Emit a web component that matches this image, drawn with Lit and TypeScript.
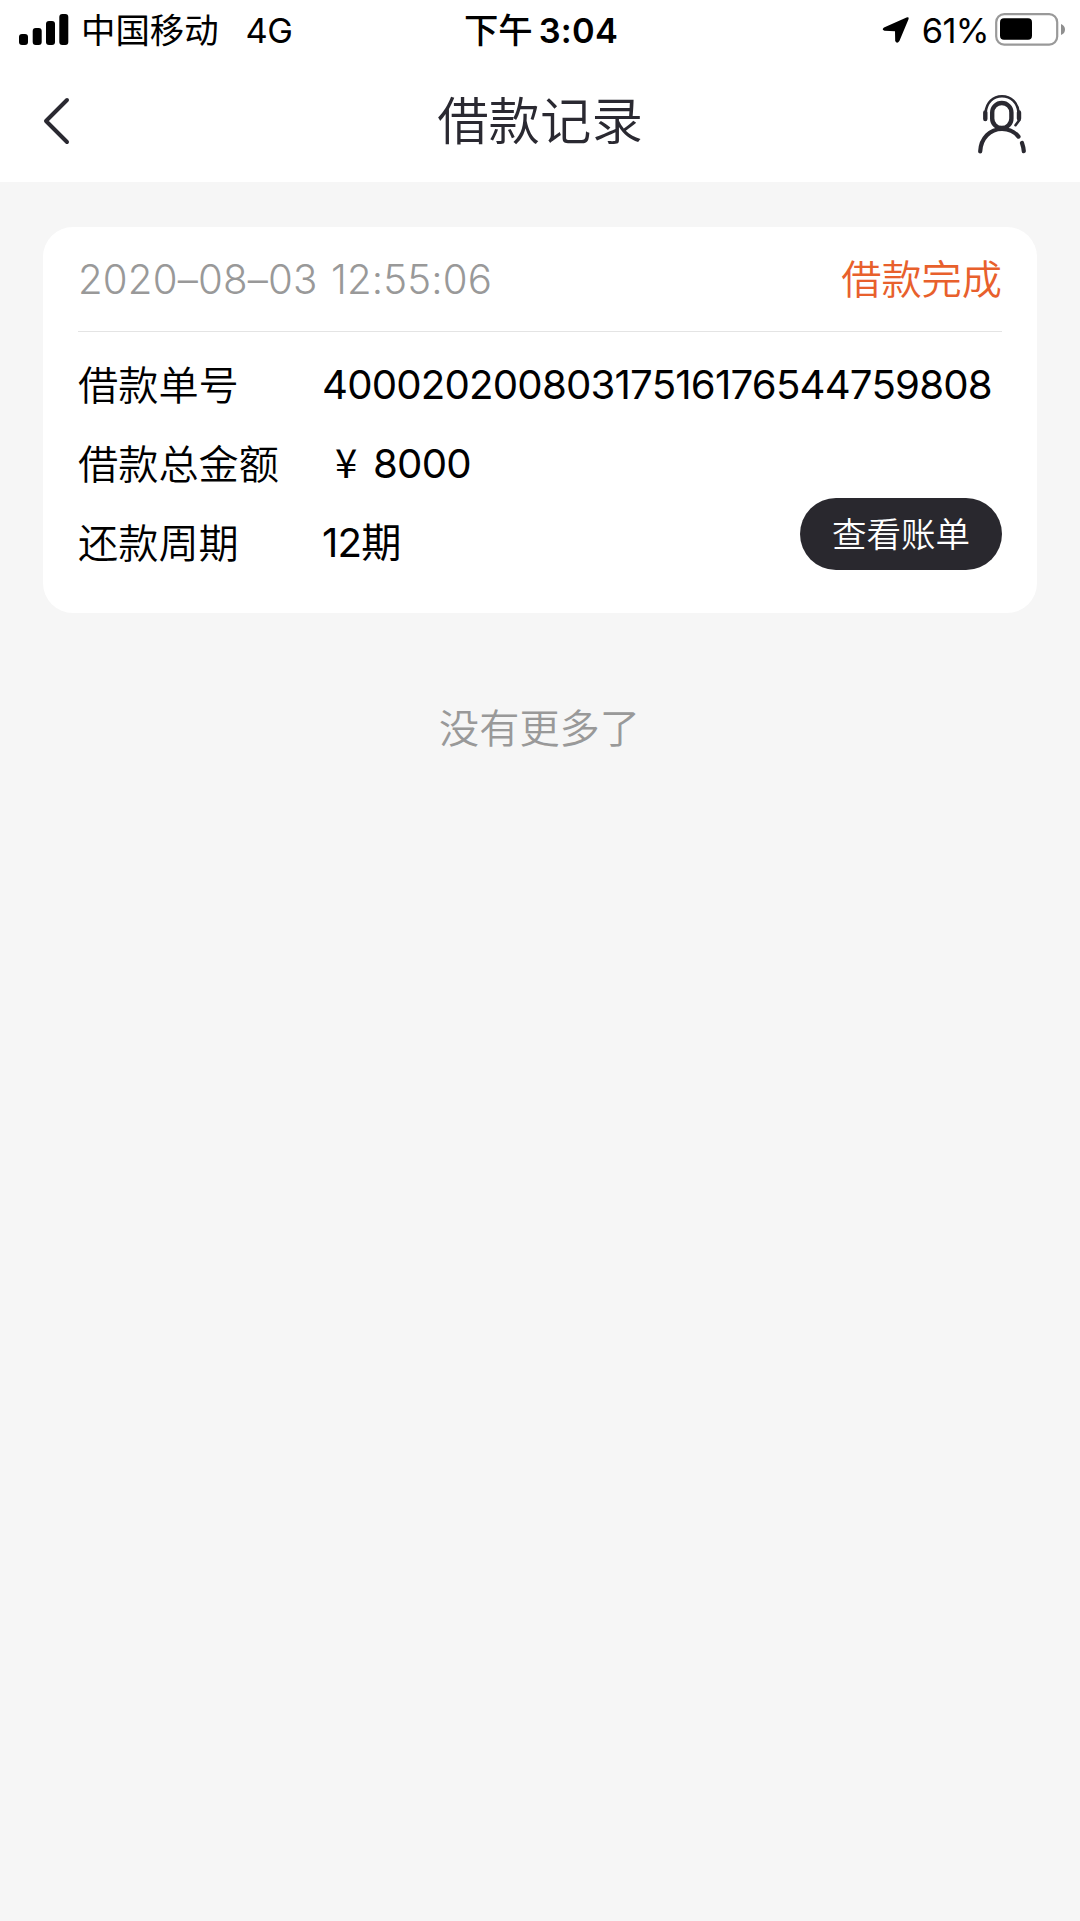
import { LitElement, html, css } from "lit";
import { customElement, property } from "lit/decorators.js";

interface Loan {
  time: string;
  status: string;
  number: string;
  amount: string;
  period: string;
}

@customElement("status-bar")
class StatusBar extends LitElement {
  static styles = css`
    :host {
      display: grid;
      grid-template-columns: 1fr auto 1fr;
      align-items: center;
      height: 60px;
      padding: 0 15px 0 19px;
      box-sizing: border-box;
      color: #000;
      font-size: 34.4px;
      line-height: 62px;
      white-space: nowrap;
    }
    .side { display: flex; align-items: center; height: 60px; }
    .right { justify-content: flex-end; }
    .signal { display: block; margin: 0 12px 3px 0; }
    .network { margin-left: 27px; letter-spacing: -0.5px; }
    .clock { display: flex; font-weight: 600; gap: 6px; margin-right: 2px; }
    .meridiem { font-weight: 500; }
    .digits { letter-spacing: 0.2px; }
    .arrow { display: block; margin: 0 12px 2px 0; }
    .percent { letter-spacing: -0.6px; margin-right: 6px; }
    .battery { margin-bottom: 3px; }
    svg { display: block; flex: none; }
  `;
  render() {
    return html`
      <div class="side">
        <svg class="signal" width="50" height="32" viewBox="0 0 50 32">
          <rect x="0" y="20" width="9" height="11" rx="3" />
          <rect x="13.7" y="14" width="9" height="17" rx="3" />
          <rect x="27" y="7" width="9" height="24" rx="3" />
          <rect x="40.3" y="0" width="9" height="31" rx="3" />
        </svg>
        <span>中国移动</span><span class="network">4G</span>
      </div>
      <div class="clock"><span class="meridiem">下午</span><span class="digits">3:04</span></div>
      <div class="side right">
        <svg class="arrow" width="28" height="28" viewBox="0 0 28 28">
          <path d="M2 11.600 24.500 1.400Q27.500 .4 26.400 3.400L17.400 25Q15 28.400 13.200 25L13 15.200 2.500 14.800Q-.8 13.600 2 11.600Z" />
        </svg>
        <span class="percent">61%</span>
        <svg class="battery" width="70" height="33" viewBox="0 0 70 33">
          <rect x="1.200" y="1.200" width="61" height="30.400" rx="8" fill="none" stroke="#999" stroke-width="2.200" />
          <rect x="5" y="5.300" width="32" height="21.400" rx="4" />
          <path d="M66 11Q70 12.500 70 16.500T66 22Z" fill="#8f8f8f" />
        </svg>
      </div>
    `;
  }
}

@customElement("nav-bar")
class NavBar extends LitElement {
  @property() heading = "";
  static styles = css`
    :host {
      display: grid;
      grid-template-columns: 1fr auto 1fr;
      align-items: center;
      height: 122px;
      padding: 0 43px;
      box-sizing: border-box;
      color: #2a2931;
    }
    .title { margin: 0; font-size: 51.4px; font-weight: 350; line-height: 122px; height: 122px; }
    .contact { justify-self: end; margin: 6px 11px 0 0; }
    svg { display: block; }
  `;
  render() {
    return html`
      <svg width="28" height="48" viewBox="0 0 28 48" fill="none" stroke="currentColor" stroke-width="4" stroke-linecap="round" stroke-linejoin="round">
        <path d="M24 3 3 24 24 45" />
      </svg>
      <h1 class="title">${this.heading}</h1>
      <svg class="contact" width="48" height="60" viewBox="0 0 48 60" fill="none" stroke="currentColor" stroke-linecap="round">
        <rect x="14.200" y="9" width="19.200" height="25" rx="9.600" stroke-width="4.400" />
        <path d="M2.200 57.400C2.800 44.200 12 35 24 35c6.500 0 12.500 2.600 16.500 7.600" stroke-width="4.200" />
        <path d="M44 49Q45.400 53 45.800 57.200" stroke-width="4.200" />
        <path d="M7.600 18.500C8.500 8.500 15 2.300 24 2.300s15.600 6.200 16.600 16.200" stroke-width="2.600" />
        <path d="M7.300 18.500v6.500M41 18.500v6" stroke-width="4.400" />
        <path d="M41.400 26 37.500 31.200" stroke-width="2.600" />
      </svg>
    `;
  }
}

@customElement("loan-card")
class LoanCard extends LitElement {
  @property({ attribute: false }) loan!: Loan;
  static styles = css`
    :host {
      display: block;
      box-sizing: border-box;
      height: 386px;
      padding: 0 35px;
      border-radius: 30px;
      background: #fff;
      color: #000;
      font-size: 40.2px;
    }
    .top {
      display: flex;
      justify-content: space-between;
      height: 104px;
      line-height: 106px;
      border-bottom: 1px solid #e4e4e4;
    }
    .time { color: #999; font-weight: 330; letter-spacing: 0.17px; word-spacing: 2px; }
    .status { color: #e8602c; font-weight: 350; }
    .body { display: flex; justify-content: space-between; position: relative; padding-top: 14px; }
    .fields {
      display: grid;
      grid-template-columns: 244px auto;
      grid-auto-rows: 79px;
      margin: 0;
      line-height: 79px;
    }
    dt, dd { margin: 0; white-space: nowrap; }
    dt { font-weight: 350; }
    dd { letter-spacing: -0.8px; font-weight: 400; line-height: 77px; }
    .yen {
      display: inline-block;
      margin: 0 6px 0 13px;
      font-family: "Noto Sans CJK SC", sans-serif;
      line-height: 1;
    }
    .bill {
      position: absolute;
      right: 0;
      top: 166px;
      width: 202px;
      height: 72px;
      padding: 1px 0 0;
      border: 0;
      border-radius: 36px;
      background: #29282e;
      color: #fff;
      font: inherit;
      font-size: 34.5px;
      font-weight: 350;
      line-height: 72px;
    }
  `;
  render() {
    const l = this.loan;
    return html`
      <div class="top"><span class="time">${l.time}</span><span class="status">${l.status}</span></div>
      <div class="body">
        <dl class="fields">
          <dt>借款单号</dt><dd>${l.number}</dd>
          <dt>借款总金额</dt><dd><span class="yen">¥</span> ${l.amount}</dd>
          <dt>还款周期</dt><dd>${l.period}</dd>
        </dl>
        <button class="bill">查看账单</button>
      </div>
    `;
  }
}

@customElement("app-root")
class AppRoot extends LitElement {
  private loan: Loan = {
    time: "2020–08–03 12:55:06",
    status: "借款完成",
    number: "40002020080317516176544759808",
    amount: "8000",
    period: "12期",
  };
  static styles = css`
    :host {
      display: flex;
      flex-direction: column;
      width: 1080px;
      height: 1921px;
      background: #f6f6f6;
      font-family: Inter, "Noto Sans CJK SC", sans-serif;
    }
    .head { background: #fff; }
    .list { padding: 45px 43px 0; }
    .end { margin: 86px 0 0; padding-right: 1px; text-align: center; color: #999; font-size: 40.2px; font-weight: 350; line-height: 60px; }
  `;
  render() {
    return html`
      <header class="head">
        <status-bar></status-bar>
        <nav-bar heading="借款记录"></nav-bar>
      </header>
      <main class="list">
        <loan-card .loan=${this.loan}></loan-card>
        <p class="end">没有更多了</p>
      </main>
    `;
  }
}
